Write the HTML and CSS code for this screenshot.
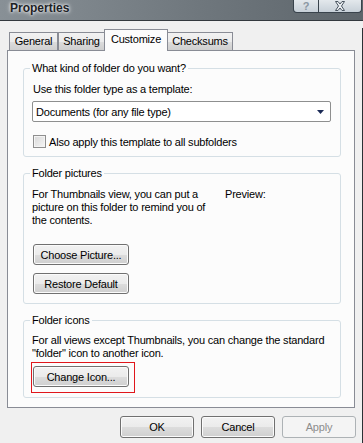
FILE: index.html
```html
<!DOCTYPE html>
<html lang="en">
<head>
  <meta charset="UTF-8" />
  <meta name="viewport" content="width=device-width, initial-scale=1.0"/>
  <title>Properties</title>
  <link rel="stylesheet" href="styles.css">
</head>
<body>
  <div class="window">
    <!-- Title bar -->
    <div class="titlebar">
      <span class="title">Properties</span>
      <div class="caption-buttons">
        <div class="cap-btn help">?</div>
        <div class="cap-btn close">
          <svg width="12" height="10" viewBox="0 0 12 10">
            <path d="M1.5 0.5 L4 0.5 L6 3 L8 0.5 L10.5 0.5 L7.5 5 L10.5 9.5 L8 9.5 L6 7 L4 9.5 L1.5 9.5 L4.5 5 Z" fill="#e9edf1" stroke="#4a5560" stroke-width="1"/>
          </svg>
        </div>
      </div>
    </div>

    <div class="frame">
      <!-- Tabs -->
      <div class="tabs">
        <div class="tab tab-general">General</div>
        <div class="tab tab-sharing">Sharing</div>
        <div class="tab tab-customize active">Customize</div>
        <div class="tab tab-checksums">Checksums</div>
      </div>

      <div class="panel">
        <fieldset class="group group-type">
          <legend>What kind of folder do you want?</legend>
          <p class="label">Use this folder type as a template:</p>
          <div class="select">
            <span>Documents (for any file type)</span>
            <svg class="arrow" width="7" height="4" viewBox="0 0 7 4">
              <path d="M0 0 H7 L3.5 4 Z" fill="#1b2a56"/>
            </svg>
          </div>
          <label class="check">
            <span class="box"></span>
            Also apply this template to all subfolders
          </label>
        </fieldset>

        <fieldset class="group group-pictures">
          <legend>Folder pictures</legend>
          <div class="pic-row">
            <p class="text">For Thumbnails view, you can put a<br>picture on this folder to remind you of<br>the contents.</p>
            <p class="preview">Preview:</p>
          </div>
          <button class="btn btn-wide btn-choose">Choose Picture...</button>
          <button class="btn btn-wide btn-restore">Restore Default</button>
        </fieldset>

        <fieldset class="group group-icons">
          <legend>Folder icons</legend>
          <p class="text">For all views except Thumbnails, you can change the standard<br>"folder" icon to another icon.</p>
          <div class="highlight">
            <button class="btn btn-wide">Change Icon...</button>
          </div>
        </fieldset>
      </div>

      <!-- Dialog buttons -->
      <div class="footer">
        <button class="btn btn-dlg">OK</button>
        <button class="btn btn-dlg">Cancel</button>
        <button class="btn btn-dlg" disabled>Apply</button>
      </div>
    </div>
  </div>
</body>
</html>
```

FILE: styles.css
```css
body {
  margin: 0;
  font-family: "Liberation Sans", Arial, sans-serif;
  font-size: 11px;
  letter-spacing: -0.2px;
  color: #000;
  background: #f0f0f0;
}

.window {
  width: 363px;
  height: 443px;
  overflow: hidden;
}

/* Title bar */
.titlebar {
  height: 20px;
  border-bottom: 1px solid #33393e;
  display: flex;
  justify-content: space-between;
  align-items: flex-start;
  background: linear-gradient(to right, #889096, #6f777d 55%, #5d656b);
}

.title {
  padding-left: 10px;
  line-height: 17px;
  font-size: 12px;
  font-weight: bold;
  letter-spacing: 0;
  color: #1d2226;
  text-shadow: 0 0 3px #fff, 0 0 5px rgba(255, 255, 255, 0.8);
}

.caption-buttons {
  display: flex;
  margin-right: 1px;
}

.cap-btn {
  height: 12px;
  border: 1px solid #39434c;
  border-top: none;
  background: linear-gradient(to bottom, #e3e8ec, #c7d0d8);
  display: flex;
  justify-content: center;
  align-items: center;
}

.cap-btn.help {
  width: 24px;
  border-bottom-left-radius: 4px;
  font-size: 11px;
  font-weight: bold;
  color: #8a96a2;
  line-height: 12px;
}

.cap-btn.close {
  width: 42px;
  border-left: none;
  border-bottom-right-radius: 4px;
}

/* Frame */
.frame {
  height: 422px;
  border-right: 1px solid #2b3035;
  background: #f0f0f0;
}

.tabs {
  display: flex;
  align-items: flex-end;
  padding-left: 9px;
  margin-top: 7px;
  height: 22px;
}

.tab {
  box-sizing: border-box;
  height: 18px;
  border: 1px solid #898c95;
  border-bottom: none;
  background: linear-gradient(to bottom, #f2f2f2 0%, #ebebeb 50%, #dddddd 50%, #cfcfcf 100%);
  text-align: center;
  line-height: 17px;
  color: #000;
}

.tab-general { width: 49px; }
.tab-sharing { width: 47px; }
.tab-customize { width: 64px; margin-left: -1px; }
.tab-checksums { width: 66px; margin-left: -1px; }

.tab.active {
  height: 22px;
  margin-bottom: -1px;
  background: #fcfcfc;
  position: relative;
  z-index: 1;
  line-height: 19px;
}

.panel {
  box-sizing: border-box;
  width: 348px;
  height: 358px;
  margin-left: 7px;
  border: 1px solid #898c95;
  background: #fcfcfc;
  padding: 10px 13px 0 15px;
}

/* Group boxes */
.group {
  margin: 0;
  min-width: 0;
  border: 1px solid #d5dfe5;
  border-radius: 3px;
  padding: 0 8px 8px 9px;
}

.group + .group {
  margin-top: 9px;
}

.group legend {
  padding: 0 2px;
  margin-left: -3px;
  line-height: 14px;
}

.label {
  margin: 7px 0 0;
  line-height: 14px;
}

.select {
  box-sizing: border-box;
  width: 299px;
  height: 21px;
  margin: 5px 0 0 -1px;
  border: 1px solid #8e8f8f;
  border-radius: 2px;
  background: #fff;
  display: flex;
  align-items: center;
  justify-content: space-between;
  padding: 0 6px 0 3px;
}

.check {
  display: flex;
  align-items: center;
  margin-top: 13px;
  height: 13px;
}

.check .box {
  box-sizing: border-box;
  width: 13px;
  height: 13px;
  margin-right: 3px;
  border: 1px solid #8f8f8f;
  background: linear-gradient(135deg, #d8d8d8, #f6f6f6);
  box-shadow: inset 0 0 0 1px #f4f4f4;
}

.pic-row {
  display: flex;
  margin-top: 8px;
}

.text {
  margin: 0;
  line-height: 13px;
  white-space: nowrap;
}

.pic-row .text {
  width: 193px;
  margin-left: -1px;
}

.preview {
  margin: 0;
  line-height: 13px;
}

.group-icons .text {
  margin-top: 7px;
  margin-left: -1px;
}

/* Buttons */
.btn {
  box-sizing: border-box;
  display: block;
  font-family: inherit;
  font-size: 11px;
  letter-spacing: -0.2px;
  color: #000;
  border: 1px solid #707070;
  border-radius: 3px;
  background: linear-gradient(to bottom, #f2f2f2 0%, #ebebeb 50%, #dddddd 50%, #cfcfcf 100%);
  box-shadow: inset 0 0 0 1px #fbfbfb;
  padding: 0;
}

.btn-wide {
  width: 96px;
  height: 21px;
}

.btn-choose {
  margin-top: 17px;
}

.btn-restore {
  margin-top: 8px;
  margin-bottom: 1px;
}

.highlight {
  display: inline-block;
  margin: 2px 0 0 -2px;
  padding: 3px 5px 5px 1px;
  border: 1px solid #e0161b;
}

.group-icons {
  padding-bottom: 4px;
}

.footer {
  display: flex;
  justify-content: flex-end;
  gap: 7px;
  margin-top: 8px;
  padding-right: 6px;
}

.btn-dlg {
  width: 74px;
  height: 22px;
}

.btn:disabled {
  color: #8d8d8d;
  border-color: #adb2b5;
  background: #f4f4f4;
  box-shadow: none;
}
```
